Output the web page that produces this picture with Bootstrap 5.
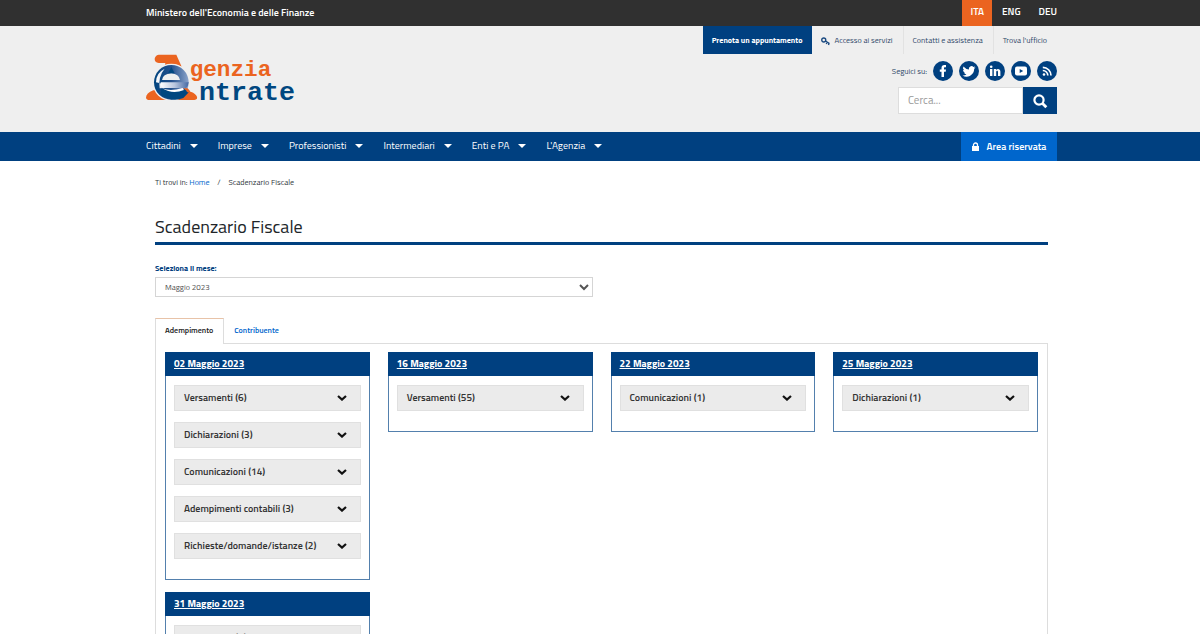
<!DOCTYPE html>
<html lang="it">
<head>
<meta charset="utf-8">
<meta name="viewport" content="width=device-width, initial-scale=1">
<title>Scadenzario Fiscale - Agenzia delle Entrate</title>
<link href="https://cdn.jsdelivr.net/npm/bootstrap@5.3.0/dist/css/bootstrap.min.css" rel="stylesheet">
<style>
  :root { --blu: #004080; --azzurro: #0066cc; --arancio: #eb6420; }
  body { font-family: "Titillium Web", Roboto, "Liberation Sans", sans-serif; font-size: 8px; line-height: 12px; color: #30373d; }
  a { text-decoration: none; }
  .site { max-width: 914px; padding: 0 0 0 3px; }
  .topbar { background: #303030; height: 26px; }
  .topbar a { color: #fff; font-weight: 600; font-size: 10px; padding: 7px 0; }
  .topbar .lang a { padding: 6px 8px 8px; margin-left: 2px; }
  .topbar .lang a:last-child { padding-right: 0; }
  .lang .on { background: var(--arancio); }
  .masthead { background: #efefef; height: 106px; }
  .services a { color: #30496a; line-height: 12px; padding: 8px 10px 8px 9px; height: 28px; }
  .services a + a + a { border-left: 1px solid #e2e2e2; }
  .services .book { background: var(--blu); color: #fff; font-weight: 700; }
  .social { color: #30496a; gap: 6px; margin: 7px 0 6px; }
  .social a { width: 20px; height: 20px; background: var(--blu); }
  .finder { width: 159px; height: 27px; }
  .finder input { font-size: 11px; border: 1px solid #ddd; border-radius: 0; padding: 0 9px; min-height: 0; }
  .finder input::placeholder { color: #999; }
  .finder button { width: 34px; padding: 0; border: 0; background: var(--blu); }
  .mainnav { background: var(--blu); height: 29px; }
  .mainnav .menu { gap: 20px; }
  .mainnav button { background: none; border: 0; padding: 0 0 2px; color: #fff; font-size: 10px; line-height: 26px; }
  .mainnav button::after { margin-left: 9px; border-top-width: 4px; border-left-width: 4px; border-right-width: 4px; vertical-align: 1px; }
  .mainnav .private { background: var(--azzurro); color: #fff; font-size: 10px; font-weight: 600; width: 96px; }
  .inner { padding: 0 9px; }
  .crumbs { padding-top: 15px; }
  .crumbs span { margin: 0 6px; }
  .crumbs a, .tabs-row a { color: var(--azzurro); }
  h1 { font-size: 18px; line-height: 24px; margin: 27px 0 17px; padding-bottom: 3px; border-bottom: 3px solid var(--blu); color: #212529; font-weight: 400; }
  .month label { color: var(--blu); font-weight: 700; line-height: 12px; margin-bottom: 3px; }
  .month select { height: 20px; border: 1px solid #d5d5d5; background: #fff; color: #555; padding: 0 5px; }
  .month { --bs-gutter-x: 18px; margin-bottom: 21px; }
  .tabs-row a { font-weight: 600; line-height: 12px; padding: 6px 10px 7px; }
  .tabs-row .active { color: #222; background: #fff; border: 1px solid #ddd; border-top-color: #e8c3a8; border-bottom: 0; padding: 5px 10px 8px 9px; margin-bottom: -1px; }
  .tabs-row { border-bottom: 1px solid #ddd; }
  .panel { border: 1px solid #ddd; border-top: 0; padding: 8px 9px; }
  .days { --bs-gutter-x: 18px; --bs-gutter-y: 12px; }
  .day { border: 1px solid #5380ad; padding-bottom: 9px; }
  .day h2 { background: var(--blu); font-size: 10px; line-height: 14px; font-weight: 700; margin: -1px -1px 9px; padding: 5px 9px; }
  .day h2 a { color: #fff; text-decoration: underline; }
  .day button { background: #ebebeb; border: 1px solid #e0e0e0; color: #333; font-size: 10px; font-weight: 600; line-height: 14px; padding: 5px 13px 5px 9px; margin-bottom: 11px; }
  .day ul { margin: 0 8px; }
</style>
</head>
<body>
<svg class="d-none">
  <symbol id="chev" viewBox="0 0 10 6"><path d="M1 1l4 3.6L9 1" fill="none" stroke="#111" stroke-width="2.2"/></symbol>
</svg>
<div class="topbar">
  <div class="container-fluid site d-flex justify-content-between">
    <a href="#">Ministero dell'Economia e delle Finanze</a>
    <nav class="lang d-flex" aria-label="Lingua"><a href="#" class="on">ITA</a><a href="#">ENG</a><a href="#">DEU</a></nav>
  </div>
</div>
<header class="masthead">
  <div class="container-fluid site d-flex justify-content-between">
    <a href="#" aria-label="Agenzia Entrate" class="mt-4 pt-1">
      <svg class="d-block" width="160" height="56" viewBox="12 18 480 168">
        <defs>
          <linearGradient id="sfera" x1="0" x2="1"><stop offset="0" stop-color="#fff"/><stop offset=".5" stop-color="#b9c6de"/><stop offset="1" stop-color="#4368a3"/></linearGradient>
          <linearGradient id="cielo" x1="0" x2="1"><stop offset="0" stop-color="#00447f"/><stop offset=".5" stop-color="#24508c"/><stop offset="1" stop-color="#8ba4cb"/></linearGradient>
        </defs>
        <path d="M50 20H103L119 56Q94 43 69 52L70 45H50C34 43 34 23 50 20Z" fill="#eb6420"/>
        <path d="M34 127Q12 136 12 149Q13 156 23 156H157Q169 154 164 144Q156 132 138 130L130 124Z" fill="#eb6420"/>
        <circle cx="88" cy="103" r="56" fill="#efefef"/>
        <circle cx="88" cy="103" r="52" fill="url(#cielo)"/>
        <path d="M42 103A46 46 0 0 1 68 62Q48 86 53 121L125 118Q105 132 75 128L70 136Q99 148 136 125" fill="url(#sfera)"/>
        <path d="M60 96Q62 78 88 76Q111 78 114 96Z" fill="#efefef"/>
        <path d="M56 103H140Q139 115 132 120H65Q55 119 56 103Z" fill="url(#sfera)"/>
        <path d="M88 57L98 76H78Z" fill="#004780"/>
        <path d="M58 122Q92 136 126 122L144 129L124 150Q93 164 56 141Z" fill="#004780"/>
        <path d="M61 121Q85 131 122 120L126 126Q91 140 61 121Z" fill="#fff"/>
        <path d="M123 121H137Q143 126 145 134Q134 136 132 127Z" fill="#eb6420"/>
        <text x="143" y="85" font-family="Liberation Mono, monospace" font-weight="700" font-size="68" fill="#eb6420">genzia</text>
        <text x="171" y="155" font-family="Liberation Mono, monospace" font-weight="700" font-size="80" fill="#004780">ntrate</text>
      </svg>
    </a>
    <div class="d-flex flex-column align-items-end">
      <nav class="services d-flex" aria-label="Servizi">
        <a href="#" class="book">Prenota un appuntamento</a>
        <a href="#"><svg class="me-1" width="9" height="9" viewBox="0 0 18 18" fill="none" stroke="#1b4a80" stroke-width="2.8"><circle cx="5.500" cy="6" r="4"/><path d="M9 8l8 5M12.500 10l-2 4M16 12l-1 4"/></svg>Accesso ai servizi</a>
        <a href="#">Contatti e assistenza</a>
        <a href="#">Trova l'ufficio</a>
      </nav>
      <div class="social d-flex align-items-center">
        <span>Seguici su:</span>
        <a href="#" aria-label="Facebook" class="rounded-circle"><svg class="d-block" width="20" height="20" viewBox="0 0 20 20"><path d="M8.500 16V10.800H6.800V8.400H8.500V7C8.500 5 9.600 4 11.300 4H13V6.200H11.900C11.200 6.200 11 6.600 11 7.200V8.400H13L12.700 10.800H11V16Z" fill="#fff"/></svg></a>
        <a href="#" aria-label="Twitter" class="rounded-circle"><svg class="d-block" width="20" height="20" viewBox="0 0 16 16"><g transform="translate(2.800 2.800) scale(.65)"><path fill="#fff" d="M5.026 15c6.038 0 9.341-5.003 9.341-9.334 0-.14 0-.282-.006-.422A6.685 6.685 0 0 0 16 3.542a6.658 6.658 0 0 1-1.889.518 3.301 3.301 0 0 0 1.447-1.817 6.533 6.533 0 0 1-2.087.793A3.286 3.286 0 0 0 7.875 6.030a9.325 9.325 0 0 1-6.767-3.429 3.289 3.289 0 0 0 1.018 4.382A3.323 3.323 0 0 1 .64 6.575v.045a3.288 3.288 0 0 0 2.632 3.218 3.203 3.203 0 0 1-.865.115 3.230 3.230 0 0 1-.614-.057 3.283 3.283 0 0 0 3.067 2.277A6.588 6.588 0 0 1 .78 13.580a6.320 6.320 0 0 1-.78-.045A9.344 9.344 0 0 0 5.026 15z"/></g></svg></a>
        <a href="#" aria-label="LinkedIn" class="rounded-circle"><svg class="d-block" width="20" height="20" viewBox="0 0 20 20" fill="#fff"><circle cx="6.200" cy="5.800" r="1.300"/><path d="M5 8H7.400V15H5ZM8.800 8H11V9C12.200 7.300 15.400 7.500 15.400 10.700V15H13V11.300C13 9.300 11.200 9.400 11.200 11.300V15H8.800Z"/></svg></a>
        <a href="#" aria-label="YouTube" class="rounded-circle"><svg class="d-block" width="20" height="20" viewBox="0 0 20 20"><rect x="4" y="5.500" width="12" height="9" rx="2" fill="#fff"/><path d="M8.700 8v4l3.500-2z" fill="#004080"/></svg></a>
        <a href="#" aria-label="RSS" class="rounded-circle"><svg class="d-block" width="20" height="20" viewBox="0 0 20 20" fill="none" stroke="#fff" stroke-width="1.700"><circle cx="7" cy="13.500" r="1.300" fill="#fff" stroke="none"/><path d="M5.800 9.500A5 5 0 0 1 10.800 14.600M5.800 6.300A8.300 8.300 0 0 1 14 14.600"/></svg></a>
      </div>
      <form class="finder d-flex" role="search">
        <input class="form-control" type="search" placeholder="Cerca..." aria-label="Cerca">
        <button type="button" class="flex-shrink-0" aria-label="Avvia ricerca"><svg class="d-block mx-auto" width="16" height="16" viewBox="0 0 16 16" fill="none" stroke="#fff" stroke-width="2.200"><circle cx="7" cy="7" r="4.600"/><path d="M10.300 10.300l4 4" stroke-width="2.800"/></svg></button>
      </form>
    </div>
  </div>
</header>
<nav class="mainnav" aria-label="Principale">
  <div class="container-fluid site d-flex justify-content-between h-100">
    <div class="menu d-flex">
      <button type="button" class="dropdown-toggle">Cittadini</button>
      <button type="button" class="dropdown-toggle">Imprese</button>
      <button type="button" class="dropdown-toggle">Professionisti</button>
      <button type="button" class="dropdown-toggle">Intermediari</button>
      <button type="button" class="dropdown-toggle">Enti e PA</button>
      <button type="button" class="dropdown-toggle">L'Agenzia</button>
    </div>
    <a href="#" class="private d-flex align-items-center justify-content-center gap-2"><svg width="7" height="9" viewBox="0 0 7 9"><path d="M0 4h7v5H0z" fill="#fff"/><path d="M1.500 4.500V3a2 2 0 0 1 4 0v1.500" fill="none" stroke="#fff" stroke-width="1.300"/></svg>Area riservata</a>
  </div>
</nav>
<main class="container-fluid site">
  <div class="inner">
    <nav class="crumbs" aria-label="Percorso">Ti trovi in: <a href="#">Home</a> <span>/</span> Scadenzario Fiscale</nav>
    <h1>Scadenzario Fiscale</h1>
    <div class="row month">
      <div class="col-6">
        <label for="mese" class="d-block">Seleziona il mese:</label>
        <select id="mese" class="d-block w-100"><option>Maggio 2023</option></select>
      </div>
    </div>
    <div class="tabs-row d-flex" role="tablist">
      <a href="#" role="tab" class="active" aria-selected="true">Adempimento</a>
      <a href="#" role="tab">Contribuente</a>
    </div>
    <div class="panel">
      <div class="row row-cols-4 days align-items-start mt-0" id="giorni"></div>
    </div>
  </div>
</main>
<script src="https://cdn.jsdelivr.net/npm/bootstrap@5.3.0/dist/js/bootstrap.bundle.min.js"></script>
<script>
  const giorni = [
    ['02', ['Versamenti (6)', 'Dichiarazioni (3)', 'Comunicazioni (14)', 'Adempimenti contabili (3)', 'Richieste/domande/istanze (2)']],
    ['16', ['Versamenti (55)']],
    ['22', ['Comunicazioni (1)']],
    ['25', ['Dichiarazioni (1)']],
    ['31', ['Versamenti (6)']]
  ];
  document.getElementById('giorni').innerHTML = giorni.map(([g, voci], i) => `
    <div class="col${i < 4 ? ' mt-0' : ''}"><section class="day">
      <h2><a href="#">${g} Maggio 2023</a></h2>
      <ul class="list-unstyled">${voci.map(v => `
        <li><button type="button" class="d-flex w-100 justify-content-between align-items-center">${v}<svg width="10" height="6"><use href="#chev"/></svg></button></li>`).join('')}
      </ul>
    </section></div>`).join('');
</script>
</body>
</html>
